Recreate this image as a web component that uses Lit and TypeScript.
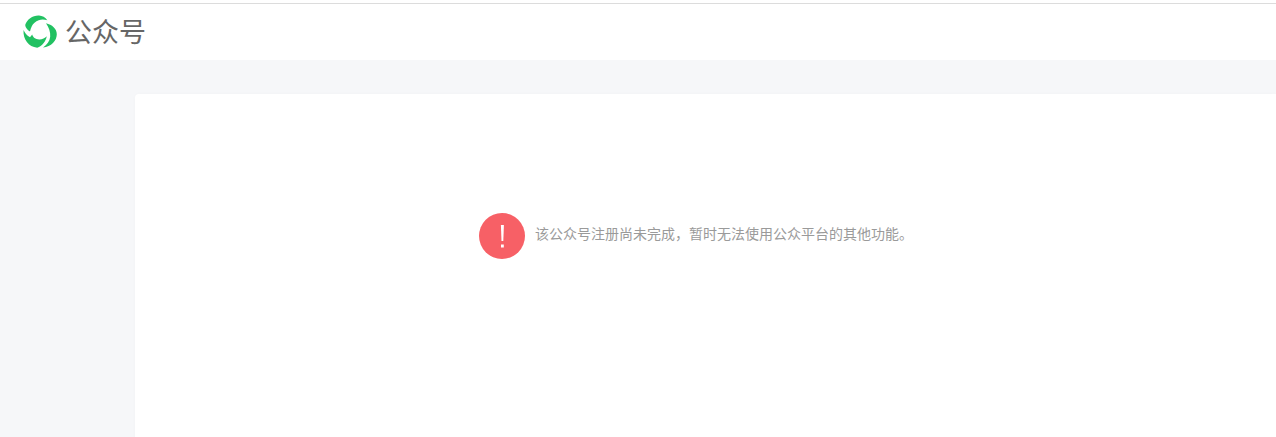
import { LitElement, html, css } from "lit";
import { customElement } from "lit/decorators.js";

@customElement("app-root")
export class AppRoot extends LitElement {
  static styles = css`
    :host {
      display: block;
      height: 100vh;
      overflow: hidden;
      background: #f6f7f9;
      font-family: "Noto Sans CJK SC", "Liberation Sans", sans-serif;
    }
    .top {
      height: 3px;
      background: #fff;
      border-bottom: 1px solid #dcdcdc;
    }
    .header {
      height: 56px;
      padding-left: 23px;
      display: flex;
      align-items: center;
      gap: 8px;
      background: #fff;
    }
    .logo {
      width: 34px;
      height: 34px;
      flex: none;
    }
    .brand {
      font-size: 27px;
      line-height: 34px;
      color: #666;
      margin-top: -3px;
    }
    .main {
      padding: 34px 0 0 135px;
    }
    .card {
      height: 500px;
      padding: 119px 0 0 344px;
      background: #fff;
      border-radius: 4px 0 0 4px;
      box-shadow: 0 0 5px rgba(0, 0, 0, 0.02);
      box-sizing: border-box;
    }
    .message {
      display: flex;
      align-items: center;
      gap: 10px;
    }
    .alert {
      width: 46px;
      height: 46px;
      flex: none;
    }
    .text {
      font-size: 14px;
      line-height: 20px;
      color: #9a9a9a;
      white-space: nowrap;
      margin-top: -6px;
    }
  `;

  render() {
    return html`
      <div class="top"></div>
      <header class="header">
        <svg class="logo" viewBox="0 0 34 34" fill="#22c162">
          <path d="M7 16.500C4.200 14.800 2.500 12.700 2.200 10 4 4.300 9.800.3 16 .6c3.300.2 6.400 1.800 8.300 4.600-2.900-.7-6-.9-8.600 0-3.200 1.100-5.600 3.300-6.900 6.100-.8 1.700-1.400 3.300-1.800 5.200z" />
          <path d="M23 8.200c6 1.400 10.800 5.300 10.800 11 0 6.300-5.500 12.600-13.800 13.300 4-2.700 6.700-6.300 7.200-10.800.4-4.700-1.300-9.500-4.200-13.500z" />
          <path d="M.5 15c1.400 2.900 3.100 5.100 6.500 7.300l2.200-2.900c.6 2.600 3.200 4.800 7 5 2.900.1 5.700-1.100 7.600-3.100-1.100 5.100-4.500 9.900-9.600 11.400C5.500 31.800 0 24.500.5 15z" />
        </svg>
        <span class="brand">公众号</span>
      </header>
      <main class="main">
        <section class="card">
          <div class="message">
            <svg class="alert" viewBox="0 0 46 46">
              <circle cx="23" cy="23" r="23" fill="#f76066" />
              <path d="M21.900 12h3l-.6 16h-1.800z" fill="#fff" />
              <rect x="22" y="31.500" width="2.800" height="3" fill="#fff" />
            </svg>
            <span class="text">该公众号注册尚未完成，暂时无法使用公众平台的其他功能。</span>
          </div>
        </section>
      </main>
    `;
  }
}
